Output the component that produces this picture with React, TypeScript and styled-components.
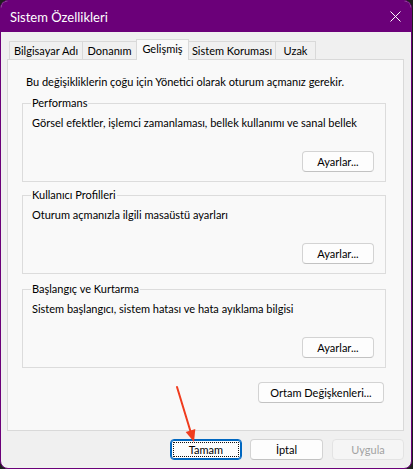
import React from "react";
import styled, { createGlobalStyle } from "styled-components";

const GlobalStyle = createGlobalStyle`
  html, body { margin: 0; padding: 0; background: #1f1f1f; }
  body {
    font-family: Lato, "Liberation Sans", Arial, sans-serif;
    font-size: 11px;
    color: #000;
  }
  * { box-sizing: border-box; }
`;

const Window = styled.div`
  position: relative;
  width: 412px;
  height: 469px;
  border: 1px solid #6b0079;
  border-radius: 8px;
  overflow: hidden;
  background: #f0f0f0;
  display: flex;
  flex-direction: column;
`;

const TitleBar = styled.div`
  flex: none;
  height: 31px;
  background: #6b0079;
  color: #fff;
  display: flex;
  align-items: center;
  justify-content: space-between;
  padding: 0 10px 0 9px;
  font-size: 13px;
`;

const CloseIcon = styled.svg`
  width: 11px;
  height: 11px;
  display: block;
`;

const Content = styled.div`
  flex: 1;
  display: flex;
  flex-direction: column;
  padding: 7px 7px 0 6px;
`;

const TabStrip = styled.div`
  display: flex;
  align-items: flex-end;
  height: 20px;
  padding-left: 2px;
  position: relative;
  z-index: 1;
`;

const Tab = styled.div<{ $w: number; $active?: boolean }>`
  width: ${(p) => p.$w}px;
  height: ${(p) => (p.$active ? 21 : 18)}px;
  margin-left: -1px;
  margin-bottom: ${(p) => (p.$active ? -1 : 0)}px;
  border: 1px solid #d9d9d9;
  border-bottom: none;
  background: ${(p) => (p.$active ? "#f9f9f9" : "#f0f0f0")};
  display: flex;
  align-items: center;
  justify-content: center;
  padding-bottom: ${(p) => (p.$active ? 3 : 0)}px;
  white-space: nowrap;
  position: relative;
  z-index: ${(p) => (p.$active ? 2 : 1)};
  &:first-child { margin-left: 0; }
`;

const Panel = styled.div`
  height: 372px;
  border: 1px solid #d9d9d9;
  background: #f9f9f9;
  padding: 14px 17px 0 14px;
  display: flex;
  flex-direction: column;
`;

const Intro = styled.div`
  line-height: 16px;
  margin-left: 4px;
  white-space: nowrap;
`;

const Group = styled.div<{ $mt: number }>`
  position: relative;
  height: 79px;
  margin-top: ${(p) => p.$mt}px;
  border: 1px solid #dcdcdc;
  padding: 11px 11px 9px 9px;
  display: flex;
  flex-direction: column;
`;

const GroupLabel = styled.div`
  position: absolute;
  top: -9px;
  left: 8px;
  padding: 0 1px;
  line-height: 16px;
  background: #f9f9f9;
  white-space: nowrap;
`;

const Description = styled.div`
  line-height: 16px;
  white-space: nowrap;
`;

const Button = styled.button<{ $w: number }>`
  position: relative;
  width: ${(p) => p.$w}px;
  height: 21px;
  padding: 0;
  font: inherit;
  color: #000;
  background: #fdfdfd;
  border: 1px solid #d3d3d3;
  border-bottom-color: #c2c2c2;
  border-radius: 4px;
  display: flex;
  align-items: center;
  justify-content: center;
  white-space: nowrap;
  flex: none;
  &:disabled {
    color: #a2a2a2;
    background: #f5f5f5;
    border-color: #e3e3e3;
  }
`;

const GroupButton = styled(Button)`
  align-self: flex-end;
  margin-top: auto;
`;

const EnvButton = styled(Button)`
  align-self: flex-end;
  margin-top: 14px;
  margin-right: 2px;
`;

const DefaultButton = styled(Button)`
  border: 1px solid #0067c0;
  box-shadow: inset 0 0 0 1px #0067c0;
  &::after {
    content: "";
    position: absolute;
    inset: 2px;
    border: 1px dotted #111;
    border-radius: 1px;
  }
`;

const Footer = styled.div`
  display: flex;
  justify-content: flex-end;
  padding-top: 8px;
`;

const FooterSlot = styled.div<{ $ml: number }>`
  margin-left: ${(p) => p.$ml}px;
`;

const Overlay = styled.svg`
  position: absolute;
  top: -1px;
  left: -1px;
  width: 413px;
  height: 469px;
  pointer-events: none;
`;

const tabs = [
  { label: "Bilgisayar Adı", w: 74 },
  { label: "Donanım", w: 55 },
  { label: "Gelişmiş", w: 53, active: true },
  { label: "Sistem Koruması", w: 88 },
  { label: "Uzak", w: 41 },
];

const groups = [
  { title: "Performans", text: "Görsel efektler, işlemci zamanlaması, bellek kullanımı ve sanal bellek", mt: 13 },
  { title: "Kullanıcı Profilleri", text: "Oturum açmanızla ilgili masaüstü ayarları", mt: 13 },
  { title: "Başlangıç ve Kurtarma", text: "Sistem başlangıcı, sistem hatası ve hata ayıklama bilgisi", mt: 15 },
];

export default function App() {
  return (
    <>
      <GlobalStyle />
      <Window>
        <TitleBar>
          <span>Sistem Özellikleri</span>
          <CloseIcon viewBox="0 0 11 11">
            <path d="M0.5 0.5 L10.5 10.5 M10.5 0.5 L0.5 10.5" stroke="#fff" strokeWidth="1" fill="none" />
          </CloseIcon>
        </TitleBar>
        <Content>
          <TabStrip>
            {tabs.map((t) => (
              <Tab key={t.label} $w={t.w} $active={t.active}>
                {t.label}
              </Tab>
            ))}
          </TabStrip>
          <Panel>
            <Intro>Bu değişikliklerin çoğu için Yönetici olarak oturum açmanız gerekir.</Intro>
            {groups.map((g) => (
              <Group key={g.title} $mt={g.mt}>
                <GroupLabel>{g.title}</GroupLabel>
                <Description>{g.text}</Description>
                <GroupButton $w={72}>Ayarlar...</GroupButton>
              </Group>
            ))}
            <EnvButton $w={126}>Ortam Değişkenleri...</EnvButton>
          </Panel>
          <Footer>
            <FooterSlot $ml={0}>
              <DefaultButton $w={72}>Tamam</DefaultButton>
            </FooterSlot>
            <FooterSlot $ml={8}>
              <Button $w={73}>İptal</Button>
            </FooterSlot>
            <FooterSlot $ml={9}>
              <Button $w={72} disabled>
                Uygula
              </Button>
            </FooterSlot>
          </Footer>
        </Content>
        <Overlay viewBox="0 0 413 469">
          <line x1="177" y1="387" x2="191" y2="433" stroke="#f03c1e" strokeWidth="2" strokeLinecap="round" />
          <polygon points="194,442 185.7,432 195.3,429" fill="#f03c1e" />
        </Overlay>
      </Window>
    </>
  );
}
